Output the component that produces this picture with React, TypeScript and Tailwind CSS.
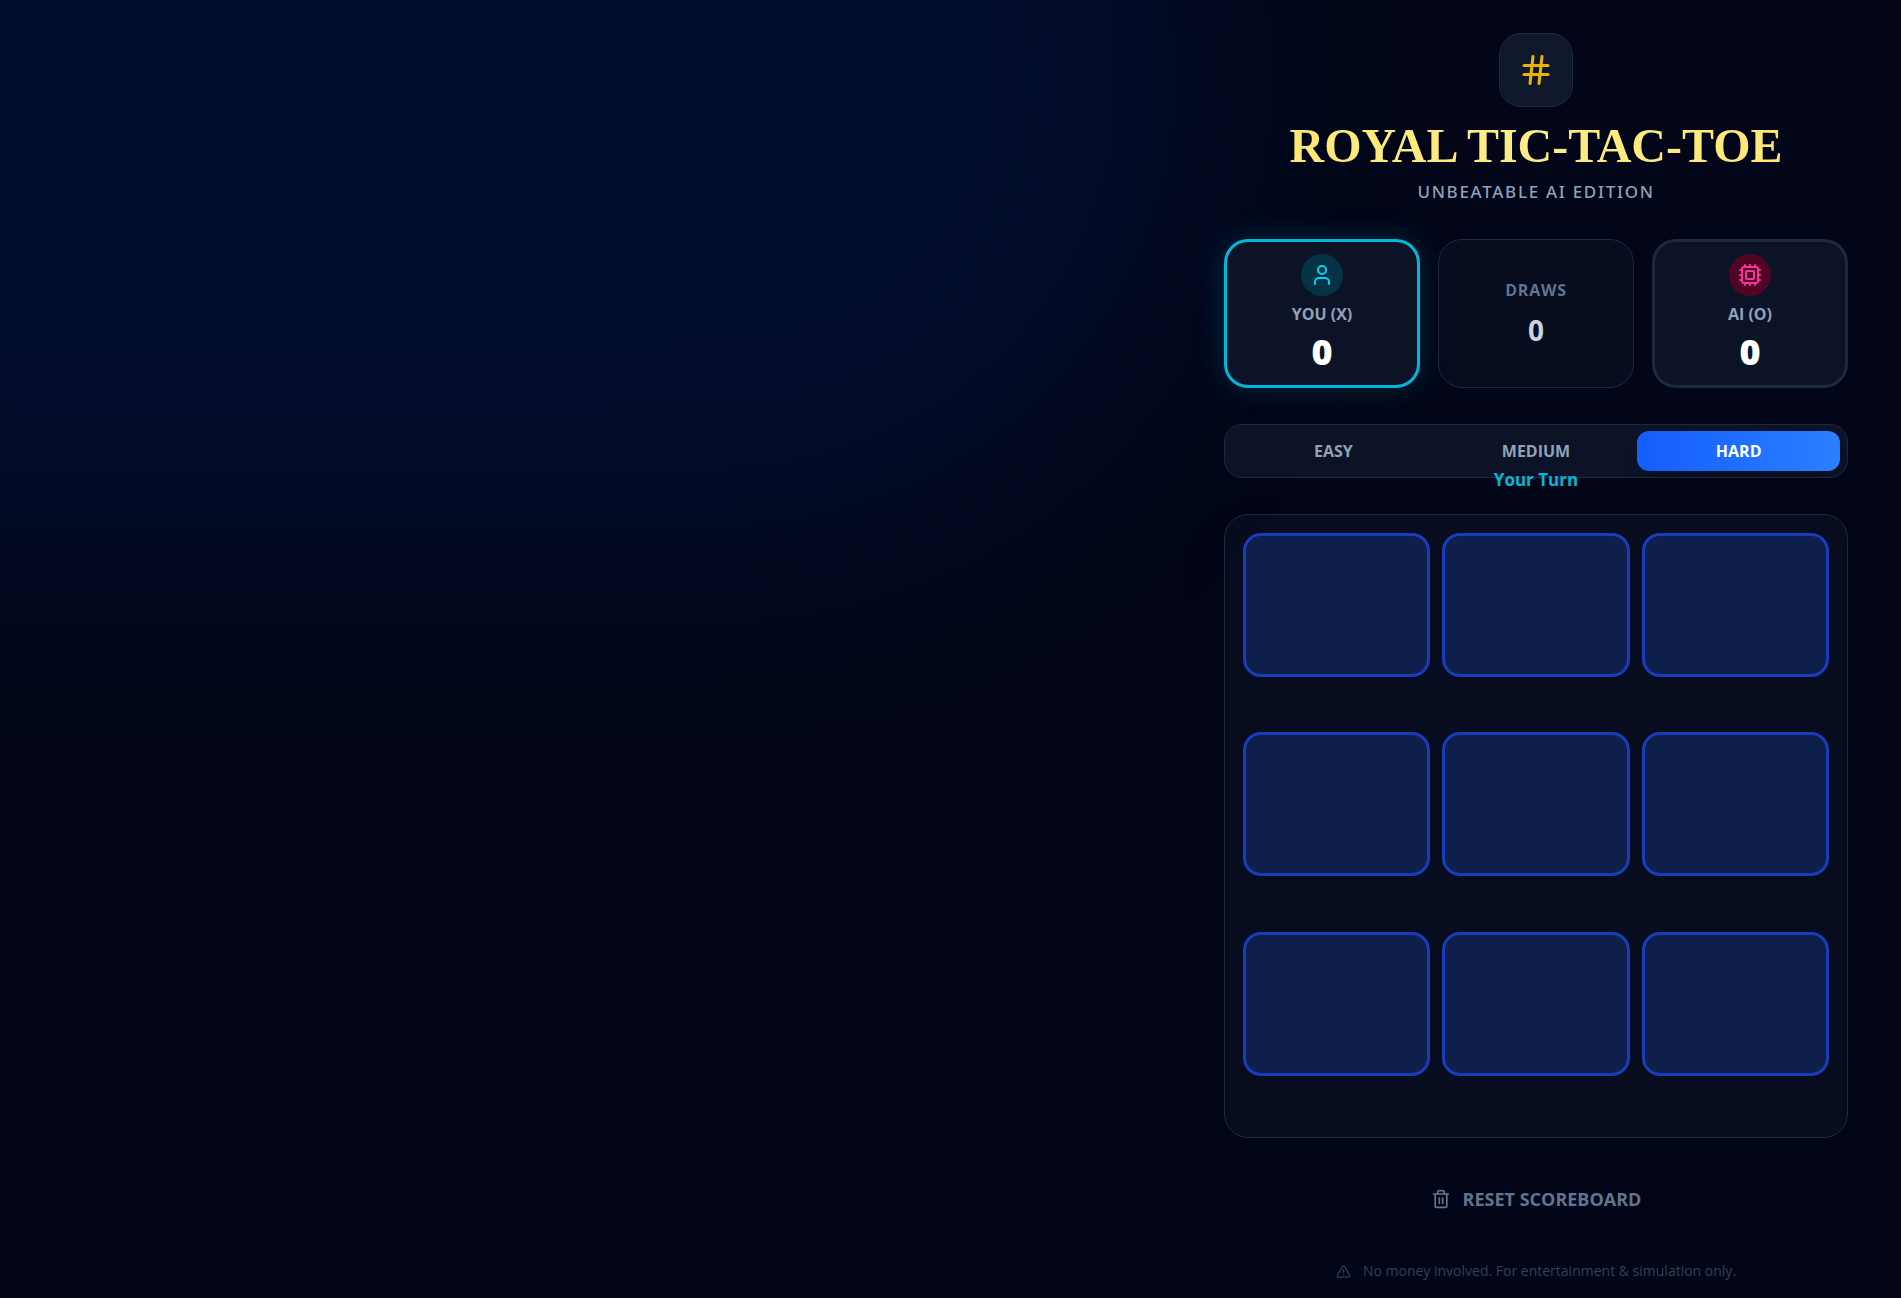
import { Cpu, Hash, Trash2, TriangleAlert, User, type LucideIcon } from "lucide-react"
import clsx from "clsx"

const LEVELS = ["Easy", "Medium", "Hard"]

function Header() {
  return (
    <header className="flex flex-col items-center text-center">
      <div className="flex h-[74px] w-[74px] items-center justify-center rounded-[22px] border border-slate-800 bg-slate-900">
        <Hash className="h-9 w-9 text-[#eab308]" />
      </div>
      <h1 className="mt-[14px] bg-gradient-to-r from-[#fde874] via-[#fdec86] to-[#fde874] bg-clip-text font-['Liberation_Serif','Times_New_Roman',serif] text-[48px] leading-[50px] font-bold whitespace-nowrap text-transparent">
        ROYAL TIC-TAC-TOE
      </h1>
      <p className="mt-[7px] font-['Noto_Sans',sans-serif] text-[17px] leading-7 font-medium tracking-widest text-slate-400 uppercase">
        Unbeatable AI Edition
      </p>
    </header>
  )
}

type PlayerCardProps = {
  icon: LucideIcon
  label: string
  score: number
  active?: boolean
  iconClass: string
}

function PlayerCard({ icon: Icon, label, score, active, iconClass }: PlayerCardProps) {
  return (
    <div
      className={clsx(
        "flex flex-col items-center rounded-[24px] border-[3px] bg-slate-900/80 py-3",
        active ? "border-cyan-500 shadow-[0_0_30px_rgba(6,182,212,0.2)]" : "border-slate-800"
      )}
    >
      <div className={clsx("flex h-[42px] w-[42px] items-center justify-center rounded-full", iconClass)}>
        <Icon className="h-6 w-6" />
      </div>
      <span className="mt-2 text-[16px] leading-5 font-bold text-slate-400 uppercase">{label}</span>
      <span className="mt-[7px] mb-px text-[36px] leading-[41px] font-extrabold text-white">{score}</span>
    </div>
  )
}

function Scoreboard() {
  return (
    <section className="grid grid-cols-3 gap-[18px]">
      <PlayerCard icon={User} label="You (X)" score={0} active iconClass="bg-cyan-950 text-cyan-400" />
      <div className="flex flex-col items-center justify-center rounded-[24px] border border-slate-800 bg-slate-900/40">
        <span className="text-[16px] leading-5 font-bold tracking-wider text-slate-500 uppercase">Draws</span>
        <span className="mt-3 text-[28px] leading-9 font-bold text-slate-300">0</span>
      </div>
      <PlayerCard icon={Cpu} label="AI (O)" score={0} iconClass="bg-pink-950 text-pink-500" />
    </section>
  )
}

function LevelPicker({ level }: { level: string }) {
  return (
    <div className="relative mt-9">
      <div className="flex rounded-[18px] border border-slate-800 bg-slate-900/80 px-[7px] py-[6px]">
        {LEVELS.map((name) => (
          <button
            key={name}
            type="button"
            className={clsx(
              "h-10 flex-1 rounded-[12px] text-[16px] leading-5 font-bold uppercase",
              name === level
                ? "bg-gradient-to-r from-blue-600 to-blue-500 text-white shadow-lg"
                : "text-slate-400"
            )}
          >
            {name}
          </button>
        ))}
      </div>
      <p className="absolute inset-x-0 top-[42px] text-center text-[17px] leading-7 font-bold text-cyan-500">
        Your Turn
      </p>
    </div>
  )
}

function Board() {
  return (
    <div className="mt-9 grid aspect-square grid-cols-3 grid-rows-3 gap-3 rounded-[24px] border border-slate-800 bg-slate-900/40 p-[18px] shadow-2xl">
      {Array.from({ length: 9 }, (_, i) => (
        <button
          key={i}
          type="button"
          aria-label={`Cell ${i + 1}`}
          className="h-36 rounded-[18px] border-[3px] border-blue-800 bg-[#193c8e]/40"
        />
      ))}
    </div>
  )
}

export default function App() {
  return (
    <div className="relative flex min-h-screen justify-end overflow-hidden bg-slate-950 px-[53px] pt-[33px] font-['Open_Sans','Noto_Sans',sans-serif] text-white">
      <div className="pointer-events-none absolute -top-[30%] -left-[30%] h-[72%] w-[93%] rounded-full bg-[#061c52]/35 blur-[100px]" />

      <main className="relative w-full max-w-[624px]">
        <Header />
        <div className="mt-[33px]">
          <Scoreboard />
        </div>
        <LevelPicker level="Hard" />
        <Board />

        <div className="mt-[43px] flex justify-center">
          <button
            type="button"
            className="flex items-center gap-3 px-4 py-1 text-[18px] leading-7 font-bold text-slate-500 uppercase"
          >
            <Trash2 className="h-5 w-5" />
            Reset Scoreboard
          </button>
        </div>

        <footer className="mt-11 flex items-center justify-center gap-3 text-[14px] leading-5 text-slate-700">
          <TriangleAlert className="h-[15px] w-[15px]" />
          No money involved. For entertainment &amp; simulation only.
        </footer>
      </main>
    </div>
  )
}
